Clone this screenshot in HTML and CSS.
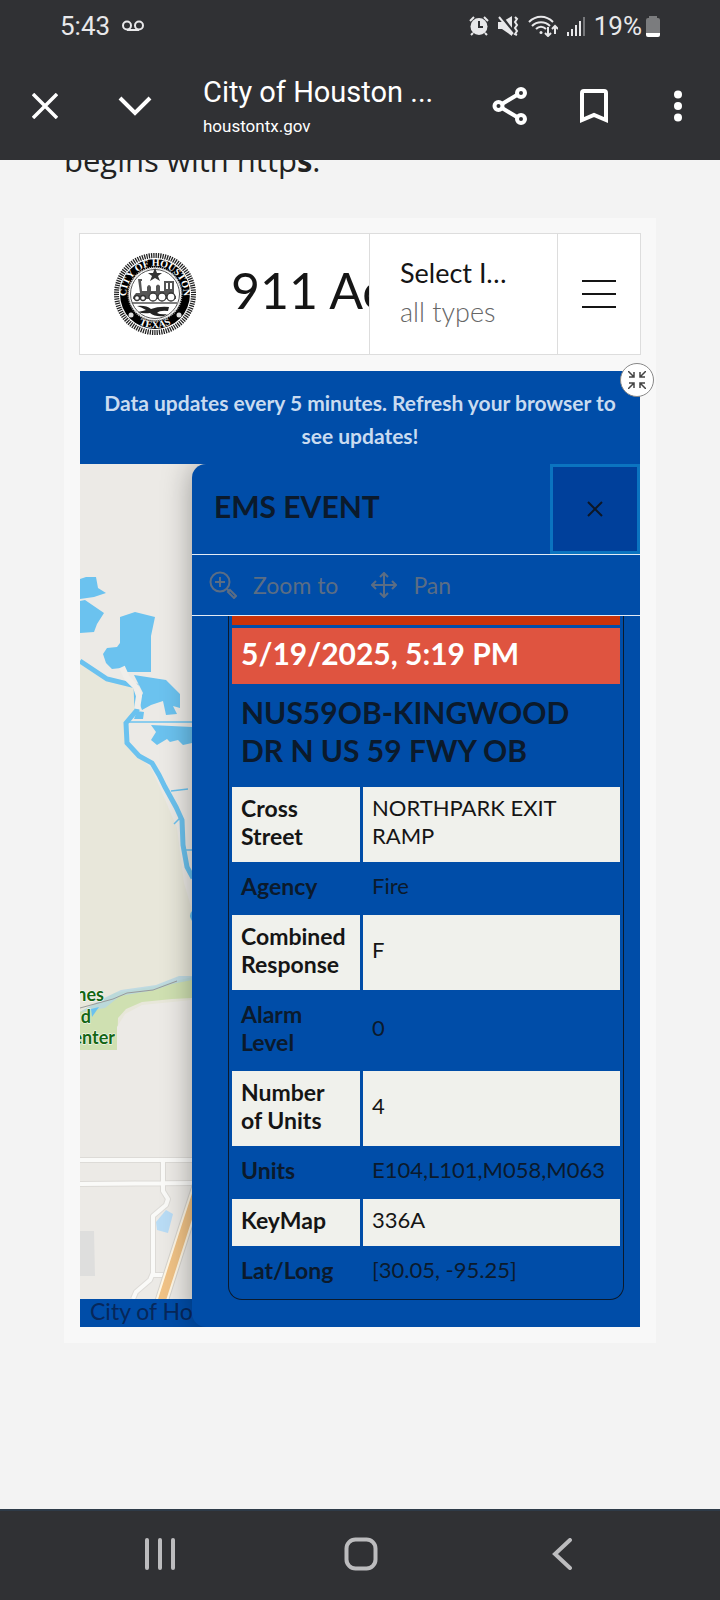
FILE: index.html
```html
<!DOCTYPE html>
<html lang="en">
<head>
    <meta charset="UTF-8">
    <meta name="viewport" content="width=device-width, initial-scale=1.0">
    <title>City of Houston - 911 Active Incidents</title>
    <link rel="stylesheet" href="styles.css">
</head>
<body>
    <header class="browser-bar">
        <div class="status">
            <span class="clock">5:43</span>
            <svg class="voicemail" width="22" height="12" viewBox="0 0 22 12" fill="none" stroke="#e8e8ea" stroke-width="2"><circle cx="5" cy="5.500" r="4"/><circle cx="17" cy="5.500" r="4"/><path d="M5 10h12"/></svg>
            <div class="status-icons">
                <svg width="20" height="20" viewBox="0 0 20 20"><circle cx="10" cy="10.500" r="8.500" fill="#e8e8ea"/><path d="M1 5l4-4M19 5l-4-4M4 17l-2 2M16 17l2 2" stroke="#e8e8ea" stroke-width="2"/><path d="M10 5v6h4" fill="none" stroke="#303134" stroke-width="2"/></svg>
                <svg width="21" height="20" viewBox="0 0 21 20"><path d="M0 6h4l10-6v20L4 13H0z" fill="#e8e8ea"/><path d="M3 0l13 17" stroke="#303134" stroke-width="3"/><path d="M1 1l14 17" stroke="#e8e8ea" stroke-width="2"/><path d="M17 1l2 2-2 3 2 3-2 3 2 3-2 3 2 1" fill="none" stroke="#e8e8ea" stroke-width="2"/></svg>
                <svg width="30" height="22" viewBox="0 0 30 22" fill="none" stroke="#e8e8ea" stroke-width="2"><path d="M1 7c7-7 17-7 24 0M4 11c5-5 13-5 18 0M8 14c3-3 7-3 10 0"/><circle cx="13" cy="17.500" r="1.500" fill="#e8e8ea" stroke="none"/><path d="M20 12v8M17 18l3 3 3-3M27 19v-8M24 14l3-3 3 3"/></svg>
                <svg width="18" height="20" viewBox="0 0 18 20"><path d="M0 16h2v4H0zM4 13h2v7H4zM8 9h2v11H8zM12 5h2v15h-2z" fill="#e8e8ea"/><path d="M16 1h2v19h-2z" fill="#77787b"/></svg>
                <span class="battery-level">19%</span>
                <svg width="14" height="21" viewBox="0 0 14 21"><path d="M3 0h8v2h1q2 0 2 2v13H0V4q0-2 2-2h1z" fill="#7b7c7e"/><path d="M0 17h14v2q0 2-2 2H2q-2 0-2-2z" fill="#fff"/></svg>
            </div>
        </div>
        <div class="toolbar">
            <button class="icon-btn" aria-label="Close tab"><svg width="26" height="26" viewBox="0 0 26 26" fill="none" stroke="#fff" stroke-width="3.500"><path d="M1 1l24 24M25 1L1 25"/></svg></button>
            <button class="icon-btn" aria-label="Minimize"><svg width="34" height="20" viewBox="0 0 34 20" fill="none" stroke="#fff" stroke-width="4"><path d="M2 2l15 15L32 2"/></svg></button>
            <div class="page-info">
                <div class="page-title">City of Houston ...</div>
                <div class="page-host">houstontx.gov</div>
            </div>
            <button class="icon-btn narrow" aria-label="Share"><svg width="36" height="38" viewBox="0 0 36 38" fill="none" stroke="#fff" stroke-width="4"><path d="M10 17l15-9M10 21l15 9"/><circle cx="6.500" cy="19" r="4"/><circle cx="29" cy="6" r="4"/><circle cx="29" cy="32" r="4"/></svg></button>
            <button class="icon-btn narrow" aria-label="Bookmark"><svg width="28" height="34" viewBox="0 0 28 34" fill="none" stroke="#fff" stroke-width="4"><path d="M2 31V4q0-2 2-2h20q2 0 2 2v27l-12-5z"/></svg></button>
            <button class="icon-btn narrow" aria-label="More"><svg width="8" height="32" viewBox="0 0 8 32" fill="#fff"><circle cx="4" cy="4.500" r="4"/><circle cx="4" cy="16" r="4"/><circle cx="4" cy="27.500" r="4"/></svg></button>
        </div>
    </header>

    <main class="page">
        <p class="notice">begins with http<b>s</b>.</p>

        <div class="embed">
            <div class="app-header">
                <svg class="seal" width="84" height="84" viewBox="0 0 84 84">
                    <defs>
                        <path id="arc-top" d="M16 54A28.500 28.500 0 1 1 68 54"/>
                        <path id="arc-bottom" d="M16 64A34 34 0 0 0 68 64"/>
                    </defs>
                    <circle cx="42" cy="42" r="38.500" fill="none" stroke="#222" stroke-width="5" stroke-dasharray="1.300 1"/>
                    <circle cx="42" cy="42" r="35" fill="#000"/>
                    <circle cx="42" cy="42" r="26.500" fill="#fff" stroke="#bbb" stroke-width="2" stroke-dasharray="1 1"/>
                    <circle cx="42" cy="42" r="24.500" fill="#fff" stroke="#555" stroke-width="1"/>
                    <text class="seal-text"><textPath href="#arc-top" startOffset="50%" text-anchor="middle">CITY OF HOUSTON</textPath></text>
                    <text class="seal-text"><textPath href="#arc-bottom" startOffset="50%" text-anchor="middle">TEXAS</textPath></text>
                    <circle cx="18" cy="63" r="2.500" fill="#ddd"/><circle cx="66" cy="63" r="2.500" fill="#ddd"/>
                    <path d="M42 16l2 5h5l-4 3 2 5-5-3-5 3 2-5-4-3h5z" fill="#333"/>
                    <path d="M25 27h4v2h-1l1 10h5v-4q2-4 4 0v4h5v-5q2-3 4 0v5h4V29h10v15h2v3H20v-2l3-4h4z" fill="#555"/>
                    <path d="M53 31h2v6h-2zM57 31h2v6h-2z" fill="#fff"/>
                    <g fill="#fff" stroke="#333" stroke-width="1.300"><circle cx="24" cy="46" r="2.500"/><circle cx="30" cy="46" r="2.500"/><circle cx="40" cy="45" r="4"/><circle cx="49" cy="45" r="4"/><circle cx="58" cy="45" r="4"/></g>
                    <path d="M19 51h45" stroke="#555" stroke-width="1.500"/>
                    <path d="M24 54q9-1 14 3 8-3 18-2l-1 4q-8-1-11 2 4 2 10 1l-3 2q-9 1-14-3-7 1-12-1 5-1 8-2-5-3-9-4z" fill="#222"/>
                </svg>
                <h1 class="app-title">911 Active Incidents</h1>
                <button class="filter">
                    <span class="filter-name">Select Incident Type</span>
                    <span class="filter-value">all types</span>
                </button>
                <button class="menu" aria-label="Menu"><svg width="34" height="30" viewBox="0 0 34 30" stroke="#151515" stroke-width="2"><path d="M0 2h34M0 15h34M0 28h34"/></svg></button>
            </div>

            <section class="panel">
                <p class="banner">Data updates every 5 minutes. Refresh your browser to see updates!</p>
                <button class="collapse" aria-label="Collapse"><svg width="18" height="18" viewBox="0 0 18 18" fill="none" stroke="#444" stroke-width="1.500"><path d="M0 0l6 6M1 6h5V1M18 0l-6 6M17 6h-5V1M0 18l6-6M1 12h5v5M18 18l-6-6M17 12h-5v5"/></svg></button>

                <div class="stage">
                    <div class="map">
                        <svg class="map-art" viewBox="0 0 560 835" preserveAspectRatio="xMinYMin slice">
                            <rect width="560" height="835" fill="#eceae6"/>
                            <path d="M0 198l26 17 28 6 2 25-11 14 2 22 24 22 10 22 16 38 7 55 8 27v100l-48 6-29 15-35 13z" fill="#e8e7da"/>
                            <g fill="#6bc2ef">
                                <path d="M0 115l6-2h10l2 11 8 5-12 4-14 2zM0 137l5-1 19 13-7 11-3 8-14 1z"/>
                                <path d="M40 153l15-5 20 5-4 19v36H47l-6-4-9 1-6-6-3-9 4-6 10-1 3-4z"/>
                                <path d="M54 211l32 5 14 14v14l-7-2 4 8-11 1-3-14-12 4-9 5-3-8 4-9zM57 247l7 1-1 7H54zM71 261l41 2v16l-9 2-5-5-8 2-3-3-10 6-6-5 5-8z"/>
                            </g>
                            <g fill="none" stroke="#6bc2ef">
                                <path d="M0 197l27 18 29 7 1 24-11 13 1 20 12 13 13 7 7 12 6 12 11 20 6 13 1 25 4 22 6 11" stroke-width="5"/>
                                <path d="M47 258h65M91 327l17-2M104 380v6h8M100 354l-6 6" stroke-width="1.500"/>
                            </g>
                            <path d="M42 203l5 11 9 9 3 9-2 13" fill="none" stroke="#f0eeea" stroke-width="6"/>
                            <path d="M112 447q-4 4 0 10z" fill="#6bc2ef"/>
                            <path d="M0 548l35-19 41-7 36-9v21l-20 1-30 3-16 7-8 9-1 32H0z" fill="#cfe0b1"/>
                            <path d="M37 588v-25l8-13 17-9 30-3 20-2v52z" fill="#eceae6"/>
                            <path d="M0 548l22-13 19-9 35-5 23-9h13v4l-20 4-17 6-35 6-15 12z" fill="#b5d7e3" opacity="0.8"/>
                            <path d="M0 544l33-9 14-6 26-3 24-9" fill="none" stroke="#999" stroke-width="1"/>
                            <path d="M11 545l8-2-7 10z" fill="#6bc2ef"/>
                            <g fill="none" stroke-linejoin="round">
                                <path d="M0 696h112M0 720l112-1M83 696v31l5 8-2 6-13 11v57l-3 7-14 12-3 7M73 811h15" stroke="#dddbd7" stroke-width="6"/>
                                <path d="M0 696h112M0 720l112-1M83 696v31l5 8-2 6-13 11v57l-3 7-14 12-3 7M73 811h15" stroke="#fafaf8" stroke-width="4"/>
                                <path d="M119 721q-19 58-38 118" stroke="#d5d3ce" stroke-width="14"/>
                                <path d="M119 721q-19 58-38 118" stroke="#fff7e5" stroke-width="12"/>
                                <path d="M119 721q-19 58-38 118" stroke="#f1c386" stroke-width="8"/>
                            </g>
                            <path d="M76 758l10-12 7 4-5 19-11-3z" fill="#b9dcf5"/>
                            <path d="M0 767h14l1 45H0z" fill="#dededd"/>
                            <g class="map-label"><text x="24" y="537">Jones</text><text x="11" y="559">and</text><text x="35" y="580">Center</text></g>
                        </svg>
                        <div class="attribution">City of Houston</div>
                    </div>

                    <div class="popup">
                        <div class="popup-header">
                            <h2>EMS EVENT</h2>
                            <button class="popup-close" aria-label="Close"><svg width="16" height="16" viewBox="0 0 16 16" stroke="#0d1726" stroke-width="2"><path d="M1 1l14 14M15 1L1 15"/></svg></button>
                        </div>
                        <div class="popup-actions">
                            <button class="action"><svg width="28" height="28" viewBox="0 0 28 28" fill="none" stroke="#5b6d84" stroke-width="2"><circle cx="11" cy="11" r="9.500"/><path d="M11 6v10M6 11h10M18 18l2 2"/><path d="M19 21l2-2 6 6-2 2z"/></svg>Zoom to</button>
                            <button class="action"><svg width="26" height="26" viewBox="0 0 26 26" fill="none" stroke="#5b6d84" stroke-width="2"><path d="M13 1v24M1 13h24M9 5l4-4 4 4M9 21l4 4 4-4M5 9l-4 4 4 4M21 9l4 4-4 4"/></svg>Pan</button>
                        </div>
                        <div class="popup-body">
                            <table class="event">
                                <colgroup><col class="col-name"><col></colgroup>
                                <tr><td class="strip" colspan="2"></td></tr>
                                <tr><th class="event-time" colspan="2">5/19/2025, 5:19 PM</th></tr>
                                <tr><th class="event-place" colspan="2">NUS59OB-KINGWOOD DR N US 59 FWY OB</th></tr>
                                <tr class="light"><th>Cross Street</th><td>NORTHPARK EXIT RAMP</td></tr>
                                <tr><th>Agency</th><td>Fire</td></tr>
                                <tr class="light"><th>Combined Response</th><td>F</td></tr>
                                <tr><th>Alarm<br>Level</th><td>0</td></tr>
                                <tr class="light"><th>Number<br>of Units</th><td>4</td></tr>
                                <tr><th>Units</th><td>E104,L101,M058,M063</td></tr>
                                <tr class="light"><th>KeyMap</th><td>336A</td></tr>
                                <tr><th>Lat/Long</th><td>[30.05, -95.25]</td></tr>
                            </table>
                        </div>
                    </div>
                </div>
            </section>
        </div>
    </main>

    <nav class="system-nav">
        <button aria-label="Recent apps"><svg width="32" height="32" viewBox="0 0 32 32" stroke="#bcbcbe" stroke-width="4" stroke-linecap="round"><path d="M3 2v28M16 2v28M29 2v28"/></svg></button>
        <button aria-label="Home"><svg width="34" height="34" viewBox="0 0 34 34" fill="none" stroke="#bcbcbe" stroke-width="4"><rect x="2.500" y="2.500" width="29" height="29" rx="9"/></svg></button>
        <button aria-label="Back"><svg width="20" height="32" viewBox="0 0 20 32" fill="none" stroke="#bcbcbe" stroke-width="4" stroke-linecap="round"><path d="M18 2L3 16l15 14"/></svg></button>
    </nav>
</body>
</html>
```
FILE: styles.css
```css
* {
    box-sizing: border-box;
}

body {
    margin: 0;
    min-height: 100vh;
    display: flex;
    flex-direction: column;
    background: #f3f3f3;
    color: #151515;
    font-family: Lato, "Open Sans", sans-serif;
}

button {
    border: none;
    padding: 0;
    background: none;
    color: inherit;
    font: inherit;
    cursor: pointer;
}

svg {
    display: block;
    flex: none;
}

/* browser chrome */
.browser-bar {
    height: 160px;
    background: #303134;
    color: #fff;
    font-family: Roboto, sans-serif;
}

.status {
    display: flex;
    align-items: center;
    height: 52px;
    padding: 0 60px;
    color: #e8e8ea;
    font-size: 26px;
}

.voicemail {
    margin-left: 12px;
}

.status-icons {
    display: flex;
    align-items: center;
    gap: 9px;
    margin-left: auto;
}

.battery-level {
    margin-right: -5px;
}

.toolbar {
    display: flex;
    align-items: center;
    height: 107px;
}

.icon-btn {
    display: flex;
    align-items: center;
    justify-content: center;
    width: 90px;
    height: 90px;
}

.icon-btn.narrow {
    width: 84px;
}

.page-info {
    flex: 1;
    padding-left: 23px;
    white-space: nowrap;
}

.page-title {
    font-size: 29px;
    line-height: 40px;
}

.page-host {
    font-size: 17px;
    line-height: 28px;
}

/* page */
.page {
    flex: 1;
    padding: 0 64px;
    overflow: hidden;
}

.notice {
    margin: -20px 0 38px;
    font-family: "Open Sans", sans-serif;
    font-size: 31px;
    line-height: 40px;
    color: #222;
}

.embed {
    padding: 15px 15px 16px;
    background: #f8f8f8;
}

.app-header {
    display: flex;
    align-items: center;
    height: 122px;
    margin-bottom: 16px;
    padding-left: 33px;
    border: 1px solid #ddd;
    background: #fff;
}

.seal-text {
    fill: #fff;
    font-family: "Liberation Serif", serif;
    font-size: 10px;
    font-weight: bold;
}

.app-title {
    flex: 1;
    min-width: 0;
    margin: 0;
    padding: 0 0 8px 34px;
    overflow: hidden;
    white-space: nowrap;
    font-size: 50px;
    font-weight: 400;
    line-height: 112px;
}

.filter {
    width: 188px;
    height: 120px;
    padding: 0 42px 4px 30px;
    border-left: 1px solid #ddd;
    text-align: left;
    font-size: 27px;
    line-height: 39px;
}

.filter span {
    display: block;
    overflow: hidden;
    text-overflow: ellipsis;
    white-space: nowrap;
}

.filter-value {
    color: #666;
    font-weight: 300;
}

.menu {
    display: flex;
    align-items: center;
    justify-content: center;
    width: 83px;
    height: 120px;
    border-left: 1px solid #ddd;
}

.panel {
    position: relative;
    margin: 0 1px;
    background: #004da8;
}

.banner {
    margin: 0;
    padding: 15px 20px 12px;
    color: #c9dbf0;
    font-size: 21px;
    font-weight: 700;
    line-height: 33px;
    text-align: center;
}

.collapse {
    position: absolute;
    top: -8px;
    right: -14px;
    z-index: 2;
    display: flex;
    align-items: center;
    justify-content: center;
    width: 34px;
    height: 34px;
    border: 1px solid #888;
    border-radius: 50%;
    background: #fff;
}

/* map with the popup docked over its right side */
.stage {
    display: grid;
    overflow: hidden;
}

.map,
.popup {
    grid-area: 1 / 1;
}

.map {
    display: flex;
    flex-direction: column;
}

.map-art {
    flex: 1;
    width: 100%;
    min-height: 0;
}

.map-label {
    fill: #146614;
    font-size: 18px;
    font-weight: 700;
    text-anchor: end;
    paint-order: stroke;
    stroke: #fff;
    stroke-width: 1px;
}

.attribution {
    height: 28px;
    padding-left: 10px;
    color: #07275a;
    font-size: 23px;
    line-height: 24px;
}

.popup {
    position: relative;
    margin-left: 20%;
    border-radius: 14px 0 0 14px;
    background: #004da8;
    box-shadow: 0 0 30px rgba(0, 0, 0, 0.35);
}

.popup-header {
    display: flex;
    align-items: center;
    justify-content: space-between;
    height: 91px;
    padding-left: 22px;
    border-bottom: 1px solid #e3ebf5;
}

.popup-header h2 {
    margin: 0;
    padding-bottom: 6px;
    color: #0b1a2c;
    font-size: 30px;
    font-weight: 700;
}

.popup-close {
    display: flex;
    align-items: center;
    justify-content: center;
    width: 90px;
    height: 90px;
    border: 3px solid #0b74c0;
    background: #00409b;
}

.popup-actions {
    display: flex;
    align-items: center;
    gap: 33px;
    height: 61px;
    padding-left: 17px;
    border-bottom: 1px solid #e3ebf5;
}

.action {
    display: flex;
    align-items: center;
    gap: 16px;
    color: #5b6d84;
    font-size: 23px;
    line-height: 28px;
}

.popup-body {
    padding: 0 16px 27px 36px;
    overflow: hidden;
}

.event {
    width: 100%;
    margin-top: -3px;
    border: 1px solid #0b1a2c;
    border-top: none;
    border-radius: 0 0 14px 14px;
    border-spacing: 3px;
    table-layout: fixed;
    color: #0b1a2c;
    font-size: 22px;
    line-height: 28px;
}

.col-name {
    width: 128px;
}

.event th,
.event td {
    padding: 7px 8px 12px 9px;
    text-align: left;
    font-weight: 400;
}

.event th {
    padding-right: 0;
    font-size: 23px;
    font-weight: 700;
}

.event .strip {
    height: 9px;
    padding: 0;
    background: #c93309;
}

.event .event-time {
    padding: 7px 9px 12px;
    background: #df5440;
    color: #fff;
    font-size: 30px;
    line-height: 37px;
}

.event .event-place {
    padding: 6px 40px 15px 9px;
    font-size: 30px;
    line-height: 38px;
}

.event .light {
    color: #151515;
}

.light th,
.light td {
    background: #f0f1ec;
}

/* phone navigation */
.system-nav {
    display: flex;
    height: 91px;
    padding: 0 58px 4px 60px;
    border-top: 2px solid #2e3b49;
    background: #303134;
}

.system-nav button {
    display: flex;
    flex: 1;
    align-items: center;
    justify-content: center;
}
```
